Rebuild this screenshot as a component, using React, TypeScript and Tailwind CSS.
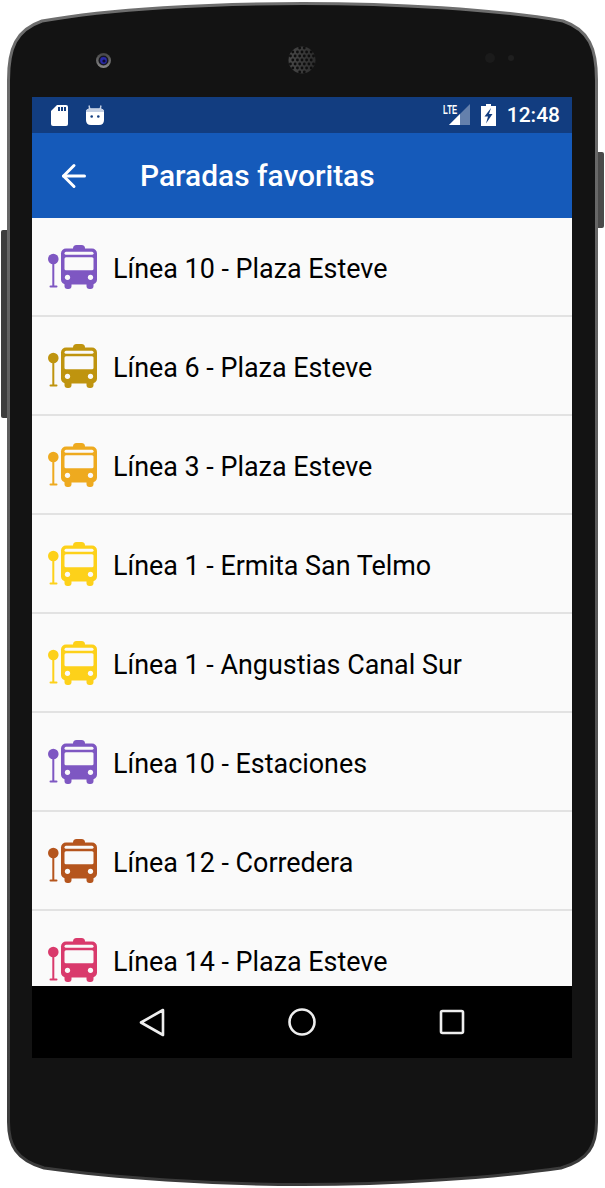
import { ArrowLeft } from 'lucide-react';

const stops = [
    { name: 'Línea 10 - Plaza Esteve', color: '#7e57c2' },
    { name: 'Línea 6 - Plaza Esteve', color: '#bf940f' },
    { name: 'Línea 3 - Plaza Esteve', color: '#eeaa1f' },
    { name: 'Línea 1 - Ermita San Telmo', color: '#fdd11a' },
    { name: 'Línea 1 - Angustias Canal Sur', color: '#fdd11a' },
    { name: 'Línea 10 - Estaciones', color: '#7e57c2' },
    { name: 'Línea 12 - Corredera', color: '#b5551d' },
    { name: 'Línea 14 - Plaza Esteve', color: '#d93a6c' },
];

function speakerDots() {
    const dots: { x: number; y: number }[] = [];
    for (let row = -3; row <= 3; row++) {
        for (let col = -3; col <= 3; col++) {
            const x = 302 + col * 4.6 + (row % 2 === 0 ? 0 : 2.3);
            const y = 60 + row * 4;
            if (Math.hypot(x - 302, y - 60) < 12.5) dots.push({ x, y });
        }
    }
    return dots;
}

function DeviceFrame() {
    const body =
        'M8.5 80 C8.5 48 16 30 42 21 C110 9 210 3.5 302.5 3.5 C395 3.5 495 9 563 21 C589 30 596.5 48 596.5 80 L596.5 1122 C596.5 1145 589 1160 561 1168 C491 1178 391 1184.5 302.5 1184.5 C214 1184.5 114 1178 44 1168 C16 1160 8.5 1145 8.5 1122 Z';
    return (
        <svg className="absolute inset-0" width="605" height="1188" viewBox="0 0 605 1188">
            <defs>
                <linearGradient id="rim" gradientUnits="userSpaceOnUse" x1="0" y1="0" x2="0" y2="1188">
                    <stop offset="0" stopColor="#6e6e6e" />
                    <stop offset="0.6" stopColor="#555555" />
                    <stop offset="1" stopColor="#3a3a3a" />
                </linearGradient>
                <linearGradient id="lens" x1="0" y1="0" x2="0" y2="1">
                    <stop offset="0" stopColor="#444444" />
                    <stop offset="1" stopColor="#8a8a8a" />
                </linearGradient>
                <linearGradient id="speaker" x1="0" y1="0" x2="1" y2="0">
                    <stop offset="0" stopColor="#484848" />
                    <stop offset="1" stopColor="#2c2c2c" />
                </linearGradient>
            </defs>
            <rect x="1" y="230" width="9" height="188" rx="2" fill="#3d3d3d" />
            <rect x="595" y="152" width="9" height="76" rx="2" fill="#4a4a4a" />
            <path d={body} fill="#131313" stroke="url(#rim)" strokeWidth="3" />
            <circle cx="103.5" cy="60.5" r="7.5" fill="url(#lens)" />
            <circle cx="103.5" cy="60.5" r="5" fill="#16161f" />
            <circle cx="103.5" cy="60.5" r="3.4" fill="#2a2aa8" />
            <circle cx="104" cy="61" r="1.6" fill="#0b0b30" />
            <circle cx="302" cy="60" r="13.5" fill="url(#speaker)" />
            {speakerDots().map((d) => (
                <circle key={`${d.x}-${d.y}`} cx={d.x} cy={d.y} r="1.4" fill="#0e0e0e" />
            ))}
            <circle cx="490" cy="58" r="5" fill="#1b1b1b" />
            <circle cx="511" cy="58" r="3" fill="#1f1f1f" />
        </svg>
    );
}

function BusIcon({ color }: { color: string }) {
    return (
        <svg width="50" height="44" viewBox="0 0 50 44" className="shrink-0">
            <circle cx="5.3" cy="14" r="5.3" fill={color} />
            <rect x="4.3" y="16" width="2" height="26" fill={color} />
            <rect x="1.5" y="40.5" width="8" height="2" rx="1" fill={color} />
            <rect x="25" y="0" width="12" height="7" rx="3.5" fill={color} />
            <rect x="13" y="3.5" width="36" height="36" rx="5" fill={color} />
            <rect x="16.5" y="6.7" width="29" height="3" rx="1.5" fill="#fafafa" />
            <rect x="16.5" y="12.3" width="29" height="13" rx="1.5" fill="#fafafa" />
            <rect x="16.5" y="36" width="7" height="8" rx="3" fill={color} />
            <rect x="38.5" y="36" width="7" height="8" rx="3" fill={color} />
            <circle cx="19.5" cy="32.3" r="2.6" fill="#fafafa" />
            <circle cx="42.5" cy="32.3" r="2.6" fill="#fafafa" />
        </svg>
    );
}

function StatusBar() {
    return (
        <div className="h-9 shrink-0 bg-[#123d80] flex items-center justify-between pl-[19px] pr-3 text-white">
            <div className="flex items-center gap-[18px]">
                <svg width="17" height="21" viewBox="0 0 17 21">
                    <path d="M6 0 L15 0 Q17 0 17 2 L17 19 Q17 21 15 21 L2 21 Q0 21 0 19 L0 6 Z" fill="#fff" />
                    <path d="M7 2h2v4H7zM10 2h2v4h-2zM13 2h2v4h-2z" fill="#123d80" />
                </svg>
                <svg width="18" height="21" viewBox="0 0 18 21">
                    <path d="M4 5 L3 0.5 M14 5 L15 0.5" stroke="#c3cfe3" strokeWidth="1.4" />
                    <path d="M0 7 Q0 3.5 4 3.5 L14 3.5 Q18 3.5 18 7 L18 15 Q18 20 13 20 L5 20 Q0 20 0 15 Z" fill="#fff" />
                    <path d="M0 7 Q0 3.5 4 3.5 L14 3.5 Q18 3.5 18 7 L0 7 Z" fill="#c3cfe3" />
                    <circle cx="5.7" cy="11.5" r="1.3" fill="#123d80" />
                    <circle cx="12.3" cy="11.5" r="1.3" fill="#123d80" />
                </svg>
            </div>
            <div className="flex items-center">
                <div className="relative w-7 h-[22px]">
                    <svg width="25" height="22" viewBox="0 0 25 22" className="absolute left-[4px] top-0">
                        <path d="M23 0 L23 21 L2 21 Z" fill="#ffffff" fillOpacity="0.35" />
                        <path d="M13 10 L13 21 L2 21 Z" fill="#fff" />
                    </svg>
                    <span className="absolute left-0 top-[-1px] text-[13px] leading-[14px] font-bold text-white [font-family:'Liberation_Sans',sans-serif] scale-x-[0.6] origin-left">
                        LTE
                    </span>
                </div>
                <svg width="15" height="22" viewBox="0 0 15 22" className="ml-[10px]">
                    <path d="M5 0h5v2h5v20H0V2h5z" fill="#fff" />
                    <path d="M10 4 L3.5 12.5 L7 12.5 L5 19.5 L11.5 10 L8 10 Z" fill="#123d80" />
                </svg>
                <span className="ml-[11px] text-[21px] leading-none font-medium text-white">12:48</span>
            </div>
        </div>
    );
}

function NavBar() {
    return (
        <div className="h-[72px] shrink-0 bg-black flex items-center justify-center">
            <svg width="540" height="72" viewBox="0 0 540 72">
                <path d="M131 24 L109 36.5 L131 49 Z" fill="none" stroke="#eeeeee" strokeWidth="2.6" strokeLinejoin="round" />
                <circle cx="270" cy="36" r="12.5" fill="none" stroke="#eeeeee" strokeWidth="2.6" />
                <rect x="409" y="25" width="22" height="22" rx="1.5" fill="none" stroke="#eeeeee" strokeWidth="2.6" />
            </svg>
        </div>
    );
}

export default function App() {
    return (
        <div className="relative w-[605px] h-[1188px] bg-white pt-[97px] pl-8 font-['Roboto',sans-serif] overflow-hidden">
            <DeviceFrame />
            <div className="relative w-[540px] h-[961px] flex flex-col">
                <StatusBar />
                <div className="h-[85px] shrink-0 bg-[#155aba] flex items-center text-white">
                    <ArrowLeft className="ml-6 w-9 h-9" strokeWidth={2} />
                    <h1 className="ml-12 text-[29.9px] leading-none font-medium">Paradas favoritas</h1>
                </div>
                <div className="flex-1 min-h-0 bg-[#fafafa] overflow-hidden">
                    {stops.map((s) => (
                        <div key={s.name} className="h-[99px] flex items-center pl-4 border-b-2 border-[#e2e2e2]">
                            <BusIcon color={s.color} />
                            <span className="ml-[15px] pt-[5px] text-[26.9px] leading-none text-black">{s.name}</span>
                        </div>
                    ))}
                </div>
                <NavBar />
            </div>
        </div>
    );
}
